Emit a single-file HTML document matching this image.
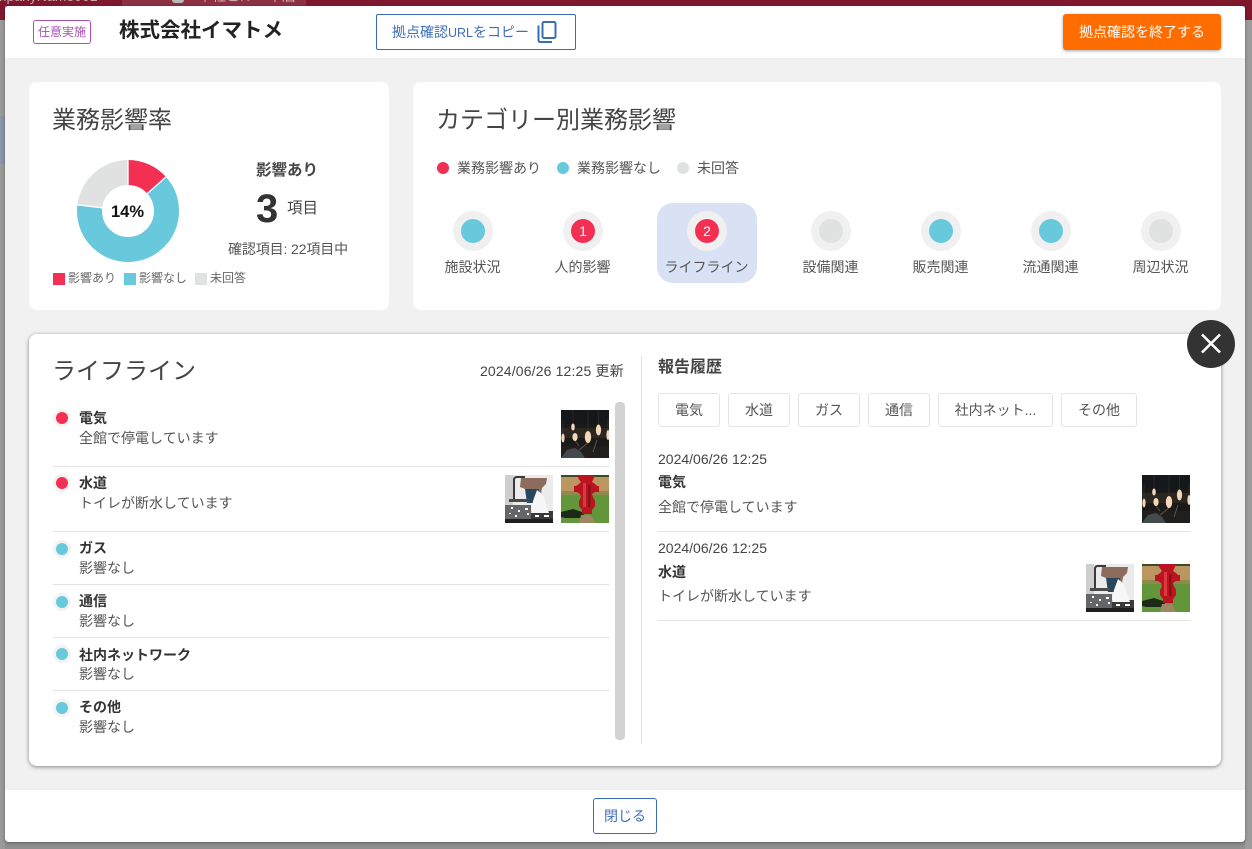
<!DOCTYPE html>
<html lang="ja">
<head>
<meta charset="utf-8">
<title>拠点確認</title>
<style>
html,body{margin:0;padding:0;width:1252px;height:849px;overflow:hidden;background:#8f8f8f;}
body{position:relative;font-family:"Liberation Sans","Noto Sans CJK JP",sans-serif;color:#333;}
.a{position:absolute;white-space:nowrap;}
.t{position:absolute;white-space:nowrap;line-height:1;}
.card{position:absolute;background:#fff;border-radius:8px;}
.b{font-weight:700;}
.hr{position:absolute;height:1px;background:#e2e2e2;}
.ring{position:absolute;border-radius:50%;background:#f0f0f0;}
.dot{position:absolute;border-radius:50%;}
.red{background:#f32f53;}.teal{background:#69c9dc;}.gray{background:#e0e1e1;}
.chip{position:absolute;top:393px;height:32px;border:1px solid #e4e4e4;border-radius:3px;background:#fff;font-size:14px;line-height:32px;text-align:center;color:#555;}
.ph{position:absolute;width:48px;height:48px;display:block;}
.cat{position:absolute;top:259px;width:100px;text-align:center;font-size:14px;line-height:16px;color:#555;white-space:nowrap;margin-left:-.5px;}
.num{position:absolute;color:#fff;font-size:14px;line-height:24px;text-align:center;width:24px;}
.s14{font-size:14px;color:#555;}
.s13b{font-size:14px;font-weight:700;color:#333;}
</style>
</head>
<body>
<!-- backdrop -->
<div class="a" style="left:0;top:0;width:1252px;height:6px;background:#80182d;"></div>
<div class="a" style="left:122px;top:0;width:184px;height:6px;background:#8d3043;"></div>
<div class="a" style="left:172px;top:0;width:12px;height:3px;background:#b9b9b9;border-radius:0 0 6px 6px;"></div>
<div class="t" style="left:-20px;top:-11px;font-size:14px;color:#c9aab1;">companyName001</div>
<div class="t" style="left:198px;top:-11px;font-size:14px;color:#c9aab1;">本社ビル・本店</div>
<div class="a" style="left:0;top:6px;width:5px;height:14px;background:#80182d;"></div>
<div class="a" style="left:1245px;top:6px;width:7px;height:14px;background:#80182d;"></div>
<div class="a" style="left:0;top:20px;width:5px;height:829px;background:#9a9a9a;"></div>
<div class="a" style="left:1245px;top:20px;width:7px;height:829px;background:#9c9c9c;"></div>
<div class="a" style="left:0;top:116px;width:5px;height:48px;background:#8a93a8;"></div>

<!-- modal -->
<div class="a" style="left:5px;top:6px;width:1240px;height:836px;background:#f1f1f1;border-radius:4px;overflow:hidden;box-shadow:0 1px 3px rgba(0,0,0,.35);">
  <div class="a" style="left:0;top:0;width:1240px;height:52px;background:#fff;"></div>
  <div class="a" style="left:0;top:784px;width:1240px;height:52px;background:#fff;"></div>
</div>

<!-- header -->
<div class="a" style="left:33px;top:20px;width:56px;height:22px;border:1px solid #a94fb5;border-radius:3px;font-size:12px;line-height:22px;text-align:center;color:#a94fb5;">任意実施</div>
<div class="t b" style="left:119px;top:21px;font-size:20.5px;color:#222;">株式会社イマトメ</div>
<div class="a" style="left:376px;top:14px;width:198px;height:34px;border:1px solid #3a6cb4;border-radius:2px;background:#fff;"></div>
<div class="t" style="left:392px;top:25px;font-size:14px;color:#3e6fb8;">拠点確認<span style="font-size:12.5px;">URL</span>をコピー</div>
<svg class="a" style="left:536px;top:20px;" width="22" height="24" viewBox="0 0 22 24" fill="none" stroke="#3a6cb4" stroke-width="2"><rect x="6.5" y="2" width="13" height="16" rx="1.5"/><path d="M2.5 5.5V20.5a1.5 1.5 0 0 0 1.5 1.5H16"/></svg>
<div class="a" style="left:1063px;top:14px;width:158px;height:36px;background:#ff6d00;border-radius:3px;box-shadow:0 1px 3px rgba(0,0,0,.35);color:#fff;font-size:14px;line-height:37px;text-align:center;">拠点確認を終了する</div>

<!-- impact card -->
<div class="card" style="left:29px;top:82px;width:360px;height:228px;"></div>
<div class="t" style="left:52px;top:109px;font-size:24px;color:#444;">業務影響率</div>
<svg class="a" style="left:76px;top:159px;" width="104" height="104" viewBox="0 0 104 104">
  <g fill="none" stroke-width="25" transform="rotate(-90 52 52)">
    <circle cx="52" cy="52" r="38.5" stroke="#e0e1e1"/>
    <circle cx="52" cy="52" r="38.5" stroke="#69c9dc" pathLength="360" stroke-dasharray="229 131" stroke-dashoffset="-48"/>
    <circle cx="52" cy="52" r="38.5" stroke="#f32f53" pathLength="360" stroke-dasharray="48 312"/>
  </g>
  <g stroke="#fff" stroke-width="1.3">
    <path d="M52 26V0M71.3 34.6 90.3 17.5M26.2 48.8 0.5 45.7"/>
  </g>
</svg>
<div class="t b" style="left:111px;top:204px;font-size:16.5px;color:#111;">14%</div>
<div class="a" style="left:53px;top:273px;width:12px;height:12px;background:#f32f53;"></div>
<div class="t" style="left:68px;top:272px;font-size:12px;color:#666;">影響あり</div>
<div class="a" style="left:124px;top:273px;width:12px;height:12px;background:#69c9dc;"></div>
<div class="t" style="left:139px;top:272px;font-size:12px;color:#666;">影響なし</div>
<div class="a" style="left:195px;top:273px;width:12px;height:12px;background:#e0e1e1;"></div>
<div class="t" style="left:210px;top:272px;font-size:12px;color:#666;">未回答</div>
<div class="t b" style="left:256px;top:163px;font-size:15.5px;color:#444;">影響あり</div>
<div class="t b" style="left:256px;top:189px;font-size:40px;color:#333;">3</div>
<div class="t" style="left:287px;top:201px;font-size:15.5px;color:#444;">項目</div>
<div class="t" style="left:228px;top:242px;font-size:14px;letter-spacing:-.12px;color:#555;">確認項目: 22項目中</div>

<!-- category card -->
<div class="card" style="left:413px;top:82px;width:808px;height:228px;"></div>
<div class="t" style="left:436px;top:109px;font-size:24px;color:#444;">カテゴリー別業務影響</div>
<div class="dot red" style="left:437px;top:162px;width:12px;height:12px;"></div>
<div class="t s14" style="left:457px;top:161px;">業務影響あり</div>
<div class="dot teal" style="left:557px;top:162px;width:12px;height:12px;"></div>
<div class="t s14" style="left:577px;top:161px;">業務影響なし</div>
<div class="dot gray" style="left:677px;top:162px;width:12px;height:12px;"></div>
<div class="t s14" style="left:697px;top:161px;">未回答</div>

<div class="a" style="left:657px;top:203px;width:100px;height:80px;background:#d9e2f4;border-radius:16px;"></div>

<div class="ring" style="left:453px;top:211px;width:40px;height:40px;"></div><div class="dot teal" style="left:461px;top:219px;width:24px;height:24px;"></div>
<div class="cat" style="left:423px;">施設状況</div>
<div class="ring" style="left:563px;top:211px;width:40px;height:40px;"></div><div class="dot red" style="left:571px;top:219px;width:24px;height:24px;"></div><div class="num" style="left:571px;top:219px;">1</div>
<div class="cat" style="left:533px;">人的影響</div>
<div class="ring" style="left:687px;top:211px;width:40px;height:40px;"></div><div class="dot red" style="left:695px;top:219px;width:24px;height:24px;"></div><div class="num" style="left:695px;top:219px;">2</div>
<div class="cat" style="left:657px;">ライフライン</div>
<div class="ring" style="left:811px;top:211px;width:40px;height:40px;"></div><div class="dot gray" style="left:819px;top:219px;width:24px;height:24px;"></div>
<div class="cat" style="left:781px;">設備関連</div>
<div class="ring" style="left:921px;top:211px;width:40px;height:40px;"></div><div class="dot teal" style="left:929px;top:219px;width:24px;height:24px;"></div>
<div class="cat" style="left:891px;">販売関連</div>
<div class="ring" style="left:1031px;top:211px;width:40px;height:40px;"></div><div class="dot teal" style="left:1039px;top:219px;width:24px;height:24px;"></div>
<div class="cat" style="left:1001px;">流通関連</div>
<div class="ring" style="left:1141px;top:211px;width:40px;height:40px;"></div><div class="dot gray" style="left:1149px;top:219px;width:24px;height:24px;"></div>
<div class="cat" style="left:1111px;">周辺状況</div>

<!-- detail card -->
<div class="card" style="left:29px;top:334px;width:1192px;height:432px;box-shadow:0 1px 4px rgba(0,0,0,.45);"></div>
<div class="t" style="left:52px;top:360px;font-size:24px;color:#444;">ライフライン</div>
<div class="t" style="left:480px;top:364px;font-size:14px;letter-spacing:.15px;color:#444;">2024/06/26 12:25 更新</div>
<div class="a" style="left:641px;top:356px;width:1px;height:388px;background:#e2e2e2;"></div>
<div class="a" style="left:615px;top:402px;width:10px;height:338px;background:#d2d2d2;border-radius:4px;"></div>

<svg width="0" height="0" style="position:absolute">
  <defs>
    <symbol id="bulb" viewBox="0 0 48 48">
      <rect width="48" height="48" fill="#1c1a18"/>
      <rect y="0" width="48" height="14" fill="#14181a"/>
      <rect y="18" width="48" height="10" fill="#2b2620"/>
      <rect y="36" width="48" height="12" fill="#211f1e"/>
      <path d="M0 48 6 40 14 38 20 42 24 48Z" fill="#454a4d"/>
      <path d="M12 28 18 36M28 32 18 40M36 30 32 42" stroke="#5a544c" fill="none"/>
      <path d="M12 0V14M27 0V22M37.500 0V16M2 10V24M47 8V22" stroke="#3a3733" stroke-width=".6" fill="none"/>
      <g fill="#f2d8b8">
        <ellipse cx="12" cy="17" rx="1.800" ry="3.500"/>
        <ellipse cx="37.500" cy="20" rx="2.600" ry="5.500"/>
        <ellipse cx="27" cy="27" rx="3.200" ry="6"/>
        <ellipse cx="14" cy="27" rx="2.600" ry="4"/>
        <ellipse cx="2" cy="28" rx="1.600" ry="4.500"/>
        <ellipse cx="47" cy="25" rx="1.600" ry="5"/>
      </g>
    </symbol>
    <symbol id="tap" viewBox="0 0 48 48">
      <rect width="48" height="48" fill="#ecebeb"/>
      <rect x="0" y="0" width="8" height="30" fill="#cfcfcf"/>
      <path d="M9 24V5Q9 2 12 2H20" stroke="#3a3a3a" stroke-width="2" fill="none"/>
      <path d="M16 3H42L41 9 37 13 36 20H24L20 14 15 12Z" fill="#8d6c5e"/>
      <path d="M20 14H34V28H22Z" fill="#27475c"/>
      <rect x="4" y="24" width="20" height="3" fill="#4a4a4a"/>
      <path d="M0 30H26V48H0Z" fill="#65666a"/>
      <path d="M26 36H48V48H26Z" fill="#3a3a3c"/>
      <path d="M32 15 38 20 44 38H26L28 26Z" fill="#f7f7f7"/>
      <rect x="0" y="44" width="48" height="4" fill="#1f1f1f"/>
      <g fill="#fff"><rect x="6" y="32" width="2" height="2"/><rect x="13" y="35" width="2" height="2"/><rect x="20" y="33" width="3" height="2"/><rect x="30" y="40" width="4" height="2"/><rect x="10" y="40" width="2" height="2"/><rect x="39" y="40" width="5" height="2"/><rect x="22" y="38" width="2" height="2"/><rect x="4" y="38" width="2" height="1"/></g>
    </symbol>
    <symbol id="hyd" viewBox="0 0 48 48">
      <rect width="48" height="48" fill="#5b8a35"/>
      <rect width="48" height="2" fill="#3c4a2a"/>
      <rect y="2" width="48" height="16" fill="#bb9660"/>
      <rect y="16" width="48" height="4" fill="#8f8a4d"/>
      <rect y="20" width="48" height="28" fill="#63953b"/>
      <path d="M0 37 12 34 24 38 20 43 4 43 0 42Z" fill="#1d2a17"/>
      <path d="M20 40 30 40 34 48H18Z" fill="#9c8762"/>
      <path d="M17 0H33V3L31 7 34 9 36 11H38V17H34L31 19 32 22 34 26V31L31 35V39H21V35L18 31V26L20 22 19 19 16 17H13V11H15L18 9 20 7 17 3Z" fill="#bb1420"/>
      <rect x="22" y="8" width="3" height="24" fill="#d83a3e"/>
      <rect x="27" y="10" width="2.500" height="22" fill="#8a0f16"/>
    </symbol>
  </defs>
</svg>

<!-- left list -->
<div class="ring" style="left:53px;top:409px;width:18px;height:18px;background:#f3f3f3;"></div><div class="dot red" style="left:56px;top:412px;width:12px;height:12px;"></div>
<div class="t s13b" style="left:79px;top:411px;">電気</div>
<div class="t s14" style="left:79px;top:431px;">全館で停電しています</div>
<svg class="ph" style="left:561px;top:410px;"><use href="#bulb"/></svg>
<div class="hr" style="left:53px;top:466px;width:556px;"></div>

<div class="ring" style="left:53px;top:474px;width:18px;height:18px;background:#f3f3f3;"></div><div class="dot red" style="left:56px;top:477px;width:12px;height:12px;"></div>
<div class="t s13b" style="left:79px;top:476px;">水道</div>
<div class="t s14" style="left:79px;top:496px;">トイレが断水しています</div>
<svg class="ph" style="left:505px;top:475px;"><use href="#tap"/></svg>
<svg class="ph" style="left:561px;top:475px;"><use href="#hyd"/></svg>
<div class="hr" style="left:53px;top:531px;width:556px;"></div>

<div class="ring" style="left:53px;top:540px;width:18px;height:18px;background:#f3f3f3;"></div><div class="dot teal" style="left:56px;top:543px;width:12px;height:12px;"></div>
<div class="t s13b" style="left:79px;top:541px;">ガス</div>
<div class="t s14" style="left:79px;top:561px;">影響なし</div>
<div class="hr" style="left:53px;top:584px;width:556px;"></div>

<div class="ring" style="left:53px;top:593px;width:18px;height:18px;background:#f3f3f3;"></div><div class="dot teal" style="left:56px;top:596px;width:12px;height:12px;"></div>
<div class="t s13b" style="left:79px;top:594px;">通信</div>
<div class="t s14" style="left:79px;top:614px;">影響なし</div>
<div class="hr" style="left:53px;top:637px;width:556px;"></div>

<div class="ring" style="left:53px;top:645px;width:18px;height:18px;background:#f3f3f3;"></div><div class="dot teal" style="left:56px;top:648px;width:12px;height:12px;"></div>
<div class="t s13b" style="left:79px;top:648px;">社内ネットワーク</div>
<div class="t s14" style="left:79px;top:667px;">影響なし</div>
<div class="hr" style="left:53px;top:690px;width:556px;"></div>

<div class="ring" style="left:53px;top:699px;width:18px;height:18px;background:#f3f3f3;"></div><div class="dot teal" style="left:56px;top:702px;width:12px;height:12px;"></div>
<div class="t s13b" style="left:79px;top:700px;">その他</div>
<div class="t s14" style="left:79px;top:720px;">影響なし</div>

<!-- right history -->
<div class="t b" style="left:658px;top:360px;font-size:16px;color:#444;">報告履歴</div>
<div class="chip" style="left:658px;width:60px;">電気</div>
<div class="chip" style="left:728px;width:60px;">水道</div>
<div class="chip" style="left:798px;width:60px;">ガス</div>
<div class="chip" style="left:868px;width:60px;">通信</div>
<div class="chip" style="left:938px;width:113px;">社内ネット...</div>
<div class="chip" style="left:1061px;width:74px;">その他</div>

<div class="t" style="left:658px;top:452px;font-size:14px;color:#444;">2024/06/26 12:25</div>
<div class="t s13b" style="left:658px;top:475px;">電気</div>
<div class="t s14" style="left:658px;top:500px;">全館で停電しています</div>
<svg class="ph" style="left:1142px;top:475px;"><use href="#bulb"/></svg>
<div class="hr" style="left:658px;top:531px;width:532px;"></div>

<div class="t" style="left:658px;top:541px;font-size:14px;color:#444;">2024/06/26 12:25</div>
<div class="t s13b" style="left:658px;top:565px;">水道</div>
<div class="t s14" style="left:658px;top:589px;">トイレが断水しています</div>
<svg class="ph" style="left:1086px;top:564px;"><use href="#tap"/></svg>
<svg class="ph" style="left:1142px;top:564px;"><use href="#hyd"/></svg>
<div class="hr" style="left:658px;top:620px;width:532px;"></div>

<!-- close circle -->
<svg class="a" style="left:1187px;top:320px;" width="48" height="48" viewBox="0 0 48 48">
  <circle cx="24" cy="24" r="24" fill="#333"/>
  <path d="M15 14.500 33 32.500M33 14.500 15 32.500" stroke="#fff" stroke-width="2.600" fill="none"/>
</svg>

<!-- footer button -->
<div class="a" style="left:593px;top:798px;width:62px;height:34px;border:1px solid #3a6cb4;border-radius:3px;background:#fff;color:#3e6fb8;font-size:14px;line-height:34px;text-align:center;">閉じる</div>
</body>
</html>
